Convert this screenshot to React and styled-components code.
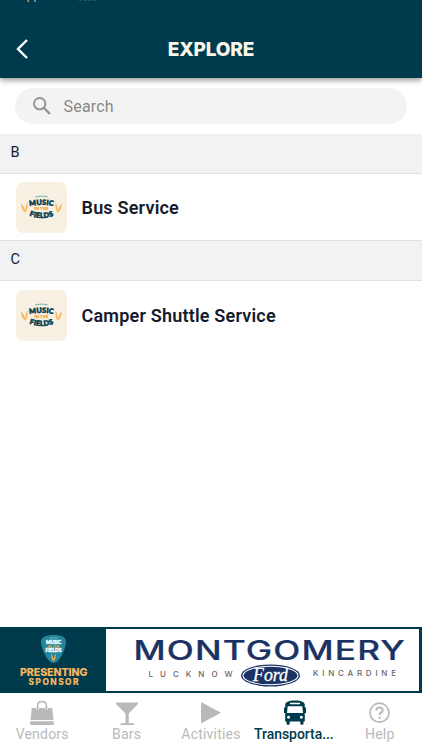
import React from 'react';
import styled, { createGlobalStyle } from 'styled-components';

const GlobalStyle = createGlobalStyle`
  * {
    box-sizing: border-box;
  }

  body {
    margin: 0;
    background: #fff;
    font-family: Roboto, sans-serif;
  }
`;

const Screen = styled.div`
  display: flex;
  flex-direction: column;
  height: 750px;
  overflow: hidden;
  background: #fff;
`;

const Header = styled.header`
  display: flex;
  flex-direction: column;
  flex: none;
  height: 78px;
  background: #003b4d;
  box-shadow: 0 2px 6px rgba(0, 0, 0, 0.45);
  z-index: 1;
`;

const StatusBar = styled.div`
  display: flex;
  gap: 8px;
  height: 22px;
  padding-left: 19px;
  overflow: hidden;
  color: #b5c7cc;
  font-size: 12px;
  line-height: 14px;
  white-space: nowrap;

  span {
    display: block;
    margin-top: -12px;
  }

  svg {
    display: block;
    margin-top: -9px;
  }
`;

const TitleBar = styled.div`
  display: grid;
  grid-template-columns: 60px 1fr 60px;
  align-items: center;
  height: 55px;
`;

const BackButton = styled.button`
  display: flex;
  padding: 0 0 2px 15px;
  border: 0;
  background: none;
`;

const Title = styled.h1`
  margin: 0;
  padding-top: 1px;
  color: #fbf5ea;
  font-family: Inter, sans-serif;
  font-size: 19px;
  font-weight: 800;
  letter-spacing: -0.15px;
  line-height: 24px;
  text-align: center;
`;

const SearchSection = styled.div`
  flex: none;
  height: 56px;
  padding: 10px 15px;
`;

const SearchBox = styled.div`
  display: flex;
  align-items: center;
  gap: 13px;
  height: 36px;
  padding-left: 17.5px;
  border-radius: 18px;
  background: #f3f3f3;
  color: #888;
  font-size: 16px;
  letter-spacing: 0.2px;

  svg {
    margin-bottom: 1px;
  }
`;

const List = styled.main`
  flex: 1;
`;

const SectionHeader = styled.h2`
  height: 40px;
  margin: 0;
  padding-left: 10.5px;
  border-bottom: 1px solid #e0e1e3;
  background: #f1f2f4;
  color: #151b2c;
  font-size: 14.5px;
  font-weight: 400;
  line-height: 38px;
`;

const Row = styled.div`
  display: flex;
  align-items: center;
  gap: 15px;
  height: ${({ $last }) => ($last ? '69px' : '67px')};
  padding-left: 15.5px;
  border-bottom: ${({ $last }) => ($last ? '0' : '1px solid #dfe0e2')};
  color: #151b2c;
  font-size: 18px;
  font-weight: 600;
  letter-spacing: 0.2px;
`;

const Thumb = styled.div`
  width: 51px;
  height: 51px;
  border-radius: 7px;
  overflow: hidden;
  background: #f8f0e3;

  svg {
    display: block;
  }
`;

const Banner = styled.div`
  display: flex;
  flex: none;
  height: 66px;
  border: solid #003b4d;
  border-width: 2px 3px 2px 0;
  background: #fff;
`;

const Presenter = styled.div`
  width: 106px;
  background: #003b4d;
`;

const TabBar = styled.nav`
  display: grid;
  grid-template-columns: repeat(5, 1fr);
  flex: none;
  height: 57px;
`;

const Tab = styled.div`
  display: flex;
  flex-direction: column;
  align-items: center;
  padding-top: 7px;
  color: ${({ $active }) => ($active ? '#003b4d' : '#b9b9b9')};
  font-size: 14px;
  font-weight: ${({ $active }) => ($active ? 500 : 400)};
  letter-spacing: ${({ $active }) => ($active ? '-0.05px' : '0.2px')};
  line-height: 16px;
  white-space: nowrap;

  svg {
    display: block;
  }

  span {
    margin-right: ${({ $active }) => ($active ? '3px' : '0')};
  }
`;

const Wheat = () => (
  <g fill="#f6b65f">
    <path d="M-1.500 0 C1 2 3 6 3.500 12 C0 10 -1 5 -1.500 0Z" />
    <path d="M7 -1 C7 4 6 9 3.500 12 C3 8 4 3 7 -1Z" />
  </g>
);

const FestivalLogo = () => (
  <svg width="51" height="51" viewBox="0 0 51 51">
    <defs>
      <path id="thumb-top" d="M10 24.8 Q25.5 21 41 24.8" />
      <path id="thumb-bottom" d="M10 32.4 Q25.5 39.6 41 32.4" />
    </defs>
    <path d="M19.5 14.8 Q25.5 13.6 31.5 14.8" fill="none" stroke="#5da9ac" strokeWidth="1.2" strokeDasharray="1.2 .4" />
    <g fontFamily="Lato" fontWeight="900" fontSize="7.2" fill="#073f4d" stroke="#073f4d" strokeWidth=".6" textAnchor="middle">
      <text><textPath href="#thumb-top" startOffset="50%" textLength="24" lengthAdjust="spacingAndGlyphs">MUSIC</textPath></text>
      <text><textPath href="#thumb-bottom" startOffset="50%" textLength="25" lengthAdjust="spacingAndGlyphs">FIELDS</textPath></text>
    </g>
    <text x="25.5" y="28.3" textAnchor="middle" textLength="14" fontFamily="Lato" fontWeight="900" fontSize="3.8" fill="#f5a545" stroke="#f5a545" strokeWidth=".25">IN THE</text>
    <g transform="translate(6 21.5) rotate(-5) scale(.8)"><Wheat /></g>
    <g transform="translate(45 21.5) rotate(5) scale(-.8 .8)"><Wheat /></g>
  </svg>
);

const PresenterLogo = () => (
  <svg width="106" height="62" viewBox="0 0 106 62">
    <path d="M53.5 6 C62 6 66 8.500 66 13 C65.500 21 59 34 53.500 34 C48 34 41.500 21 41 13 C41 8.500 45 6 53.500 6Z" fill="#24869a" />
    <path d="M49.500 9 H57.500" stroke="#8ac4c7" strokeWidth="1" strokeDasharray="1.200 .5" />
    <g fontFamily="Lato" fontWeight="900" textAnchor="middle">
      <g fill="#fff" stroke="#fff" strokeWidth=".4" fontSize="4.6">
        <text x="53.500" y="14.700" textLength="15" lengthAdjust="spacingAndGlyphs">MUSIC</text>
        <text x="53.500" y="23" textLength="16" lengthAdjust="spacingAndGlyphs">FIELDS</text>
      </g>
      <text x="53.500" y="18.600" fontSize="3.500" textLength="12" fill="#f2b15c">IN THE</text>
    </g>
    <path d="M51.500 25.500 Q52.500 29 53.500 32 Q54.500 29 55.500 25.500 M51.500 28 L53.500 32 L55.500 28" fill="none" stroke="#f2b15c" strokeWidth="1" />
    <g fill="#f5b65d" stroke="#f5b65d">
      <text x="20" y="47" fontFamily="Inter" fontWeight="800" fontSize="10.500" strokeWidth=".1" textLength="67.500" lengthAdjust="spacingAndGlyphs">PRESENTING</text>
      <text x="28.500" y="55.700" fontFamily="Inter" fontWeight="800" fontSize="8.3" strokeWidth=".1" textLength="50">SPONSOR</text>
    </g>
  </svg>
);

const DealerLogo = () => (
  <svg width="312" height="62" viewBox="106 629 312 62">
    <g transform="translate(133.500 660) scale(1.33 1)">
      <text fontFamily="Inter" fontWeight="500" fontSize="26.500" textLength="204" fill="#1b3264" stroke="#1b3264" strokeWidth=".2">MONTGOMERY</text>
    </g>
    <g fontFamily="Inter" fontSize="8" fontWeight="500" fill="#666">
      <text x="148.500" y="676.500" textLength="84">LUCKNOW</text>
      <text x="313" y="676" textLength="83">KINCARDINE</text>
    </g>
    <ellipse cx="270.500" cy="675.500" rx="29.500" ry="11" fill="#1b3264" />
    <ellipse cx="270.500" cy="675.500" rx="27.500" ry="9.300" fill="none" stroke="#fff" strokeWidth="1.100" />
    <text x="270.500" y="681" textAnchor="middle" fontFamily="Liberation Serif" fontStyle="italic" fontWeight="400" fontSize="18" textLength="35" lengthAdjust="spacingAndGlyphs" fill="#fff" stroke="#fff" strokeWidth=".3">Ford</text>
  </svg>
);

const VendorsIcon = () => (
  <svg width="26" height="26" viewBox="0 0 26 26">
    <path d="M2.800 8 H23.200 L24.500 20 H1.500Z M1.200 21.200 H24.800 V25 H1.200Z" fill="currentColor" />
    <path d="M8.600 10 V6 Q8.600 1.500 13 1.500 Q17.400 1.500 17.400 6 V10" fill="none" stroke="#fff" strokeWidth="2.800" />
    <path d="M8.600 10 V6 Q8.600 1.500 13 1.500 Q17.400 1.500 17.400 6 V10" fill="none" stroke="currentColor" strokeWidth="1.700" />
  </svg>
);

const BarsIcon = () => (
  <svg width="26" height="26" viewBox="0 0 26 26">
    <path d="M2 2.500 H24 V4 L14.700 13.500 V23.300 H20 V25 H6.500 V23.300 H11.500 V13.500 L2 4Z" fill="currentColor" />
  </svg>
);

const PlayIcon = () => (
  <svg width="26" height="26" viewBox="0 0 26 26">
    <path d="M3 2 L23 12.700 L3 23.500Z" fill="currentColor" />
  </svg>
);

const BusIcon = () => (
  <svg width="26" height="26" viewBox="0 0 26 26">
    <path
      fillRule="evenodd"
      fill="currentColor"
      d="M13 .5 C20 .5 22.500 2 22.800 5 V7.500 H24 V13 H22.800 V21.500 H21.500 V23.500 Q21.500 24.700 20.300 24.700 H19.500 Q18.300 24.700 18.300 23.500 V21.500 H7.700 V23.500 Q7.700 24.700 6.500 24.700 H5.700 Q4.500 24.700 4.500 23.500 V21.500 H3.200 V13 H2 V7.500 H3.200 V5 C3.500 2 6 .5 13 .5Z M8 2.800 V4.200 H18 V2.800Z M5.700 6.200 L5 13 H21 L20.300 6.200Z M6.600 15.800 a1.500 1.500 0 1 0 .01 0Z M19.400 15.800 a1.500 1.500 0 1 0 .01 0Z"
    />
  </svg>
);

const HelpIcon = () => (
  <svg width="26" height="26" viewBox="0 0 26 26" fill="none" stroke="currentColor">
    <circle cx="12.500" cy="12.700" r="9.500" strokeWidth="1.700" />
    <path d="M9.300 10.400 Q9.300 7.400 12.500 7.400 Q15.700 7.400 15.700 10.200 Q15.700 11.700 14 12.700 Q12.500 13.700 12.500 15.200" strokeWidth="2" />
    <path d="M12.500 16.800 V18.800" strokeWidth="2" />
  </svg>
);

const sections = [
  { letter: 'B', name: 'Bus Service' },
  { letter: 'C', name: 'Camper Shuttle Service' },
];

const tabs = [
  { label: 'Vendors', Icon: VendorsIcon },
  { label: 'Bars', Icon: BarsIcon },
  { label: 'Activities', Icon: PlayIcon },
  { label: 'Transporta...', Icon: BusIcon, active: true },
  { label: 'Help', Icon: HelpIcon },
];

const App = () => {
  return (
    <>
      <GlobalStyle />
      <Screen>
        <Header>
          <StatusBar>
            <span>App Store</span>
            <svg width="20" height="10" viewBox="0 0 20 10">
              <path d="M1 10 V7 M6 10 V5 M11 10 V3 M16 10 V1" stroke="#23566a" strokeWidth="3" />
            </svg>
          </StatusBar>
          <TitleBar>
            <BackButton aria-label="Back">
              <svg width="14" height="22" viewBox="0 0 14 22">
                <path d="M12 2 L3 11 L12 20" fill="none" stroke="#fff" strokeWidth="2.400" />
              </svg>
            </BackButton>
            <Title>EXPLORE</Title>
          </TitleBar>
        </Header>

        <SearchSection>
          <SearchBox>
            <svg width="18" height="18" viewBox="0 0 18 18" fill="none" stroke="#929292">
              <circle cx="6.700" cy="6.700" r="5.700" strokeWidth="1.900" />
              <path d="M10.800 10.800 L17 17" strokeWidth="2.300" />
            </svg>
            <span>Search</span>
          </SearchBox>
        </SearchSection>

        <List>
          {sections.map(({ letter, name }, index) => (
            <section key={letter}>
              <SectionHeader>{letter}</SectionHeader>
              <Row $last={index === sections.length - 1}>
                <Thumb>
                  <FestivalLogo />
                </Thumb>
                <span>{name}</span>
              </Row>
            </section>
          ))}
        </List>

        <Banner>
          <Presenter>
            <PresenterLogo />
          </Presenter>
          <DealerLogo />
        </Banner>

        <TabBar>
          {tabs.map(({ label, Icon, active }) => (
            <Tab key={label} $active={active}>
              <Icon />
              <span>{label}</span>
            </Tab>
          ))}
        </TabBar>
      </Screen>
    </>
  );
};

export default App;
